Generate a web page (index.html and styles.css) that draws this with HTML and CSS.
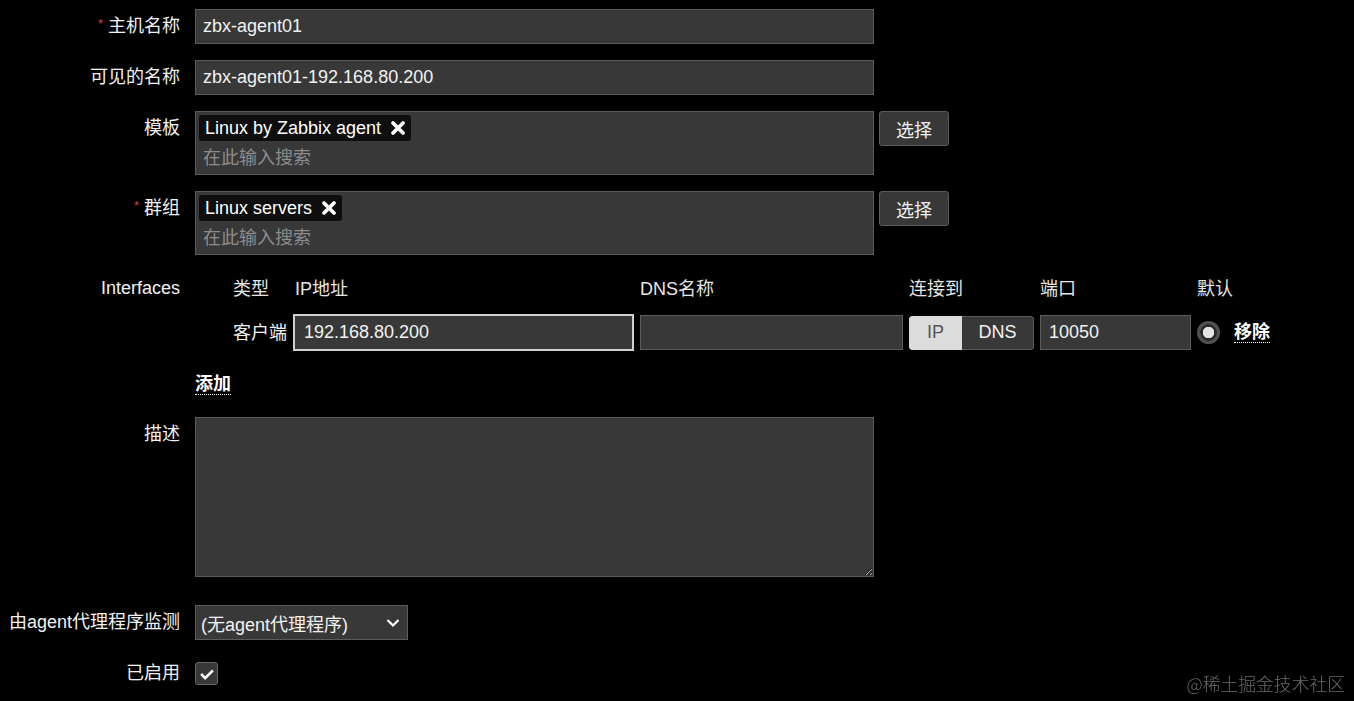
FILE: index.html
```html
<!DOCTYPE html>
<html>
<head>
    <title>主机</title>
    <meta charset="UTF-8">
    <link rel="stylesheet" href="styles.css">
</head>
<body>
    <form class="host-form">
        <div class="form-row">
            <label class="form-label"><span class="required">*</span>主机名称</label>
            <div class="form-field">
                <input class="text-input wide" type="text" value="zbx-agent01">
            </div>
        </div>

        <div class="form-row">
            <label class="form-label">可见的名称</label>
            <div class="form-field">
                <input class="text-input wide" type="text" value="zbx-agent01-192.168.80.200">
            </div>
        </div>

        <div class="form-row">
            <label class="form-label">模板</label>
            <div class="form-field">
                <div class="multiselect">
                    <div class="tag-list">
                        <span class="tag">Linux by Zabbix agent
                            <svg class="tag-remove" viewBox="0 0 16 16" width="16" height="16"><path d="M3 3 L13 13 M13 3 L3 13" stroke="#fff" stroke-width="3.8" stroke-linecap="round"/></svg>
                        </span>
                    </div>
                    <input class="ms-search" type="text" placeholder="在此输入搜索">
                </div>
                <button type="button" class="btn-select">选择</button>
            </div>
        </div>

        <div class="form-row">
            <label class="form-label"><span class="required">*</span>群组</label>
            <div class="form-field">
                <div class="multiselect">
                    <div class="tag-list">
                        <span class="tag">Linux servers
                            <svg class="tag-remove" viewBox="0 0 16 16" width="16" height="16"><path d="M3 3 L13 13 M13 3 L3 13" stroke="#fff" stroke-width="3.8" stroke-linecap="round"/></svg>
                        </span>
                    </div>
                    <input class="ms-search" type="text" placeholder="在此输入搜索">
                </div>
                <button type="button" class="btn-select">选择</button>
            </div>
        </div>

        <div class="form-row">
            <label class="form-label">Interfaces</label>
            <div class="iface-table">
                <div class="iface-head">类型</div>
                <div class="iface-head head-ip">IP地址</div>
                <div class="iface-head">DNS名称</div>
                <div class="iface-head">连接到</div>
                <div class="iface-head">端口</div>
                <div class="iface-head">默认</div>

                <div class="iface-type">客户端</div>
                <input class="text-input ip-input" type="text" value="192.168.80.200">
                <input class="text-input" type="text" value="">
                <div class="conn-toggle">
                    <span class="conn-option active">IP</span>
                    <span class="conn-option">DNS</span>
                </div>
                <input class="text-input port-input" type="text" value="10050">
                <div class="iface-default">
                    <span class="radio"></span>
                    <a class="link-action">移除</a>
                </div>
            </div>
        </div>

        <div class="form-row">
            <span class="form-label"></span>
            <div class="form-field">
                <a class="link-action link-add">添加</a>
            </div>
        </div>

        <div class="form-row row-desc">
            <label class="form-label">描述</label>
            <div class="form-field">
                <textarea class="desc-input"></textarea>
            </div>
        </div>

        <div class="form-row">
            <label class="form-label">由agent代理程序监测</label>
            <div class="form-field">
                <div class="select-box">
                    <span>(无agent代理程序)</span>
                    <svg viewBox="0 0 16 16" width="16" height="16"><path d="M2.5 5 L8 10.5 L13.5 5" fill="none" stroke="#fff" stroke-width="2.2"/></svg>
                </div>
            </div>
        </div>

        <div class="form-row">
            <label class="form-label">已启用</label>
            <div class="form-field">
                <span class="checkbox">
                    <svg viewBox="0 0 22 22" width="20" height="20"><path d="M4.5 11 L9 15.5 L17.5 7" fill="none" stroke="#fff" stroke-width="3"/></svg>
                </span>
            </div>
        </div>
    </form>

    <div class="watermark">@稀土掘金技术社区</div>
</body>
</html>
```

FILE: styles.css
```css
body {
    margin: 0;
    padding: 9px 0 0 0;
    background-color: #000;
    color: #f2f2f2;
    font-family: "Liberation Sans", "Noto Sans CJK SC", sans-serif;
    font-size: 18px;
    height: 692px;
    overflow: hidden;
}
.host-form {
    display: flex;
    flex-direction: column;
}
.form-row {
    display: grid;
    grid-template-columns: 180px 1fr;
    column-gap: 15px;
    margin-bottom: 16px;
}
.row-desc {
    margin-top: -1px;
    margin-bottom: 28px;
}
.form-label {
    height: 35px;
    text-align: right;
    line-height: 35px;
    white-space: nowrap;
    overflow: hidden;
}
.required {
    color: #d64541;
    font-size: 13px;
    line-height: 1;
    vertical-align: 4px;
    margin-right: 5px;
}
.form-field {
    display: flex;
    align-items: flex-start;
    min-height: 35px;
}
input {
    font-family: inherit;
}
.text-input {
    box-sizing: border-box;
    height: 35px;
    padding: 0 8px;
    background-color: #383838;
    border: 1px solid #5c5c5c;
    color: #f2f2f2;
    font-size: 18px;
    outline: none;
    width: 100%;
}
.text-input.wide {
    width: 679px;
    padding-left: 7px;
}
.multiselect {
    box-sizing: border-box;
    width: 679px;
    height: 64px;
    padding: 3px;
    background-color: #383838;
    border: 1px solid #5c5c5c;
}
.tag-list {
    display: flex;
    height: 26px;
}
.tag {
    display: inline-flex;
    align-items: center;
    height: 26px;
    padding: 0 5px 0 6px;
    gap: 9px;
    background-color: #0e0e0e;
    border-radius: 3px;
    color: #fff;
    line-height: 26px;
}
.tag-remove {
    display: block;
}
.ms-search {
    display: block;
    box-sizing: border-box;
    width: 100%;
    height: 30px;
    padding: 4px 4px 0 4px;
    background: transparent;
    border: none;
    color: #f2f2f2;
    font-size: 18px;
    outline: none;
}
.ms-search::placeholder {
    color: #8c8c8c;
}
.btn-select {
    box-sizing: border-box;
    width: 70px;
    height: 35px;
    margin-left: 5px;
    background-color: #383838;
    border: 1px solid #5c5c5c;
    border-radius: 3px;
    color: #f2f2f2;
    font-family: inherit;
    font-size: 18px;
}
.iface-table {
    display: grid;
    grid-template-columns: 54px 341px 263px 125px 151px auto;
    grid-template-rows: 35px 37px;
    column-gap: 6px;
    row-gap: 8px;
    align-items: center;
    padding-left: 38px;
}
.iface-head {
    color: #e6e6e6;
    white-space: nowrap;
    line-height: 20px;
}
.head-ip {
    padding-left: 2px;
}
.iface-type {
    white-space: nowrap;
    line-height: 20px;
}
.ip-input {
    height: 37px;
    border: 2px solid #d0d0d0;
    padding-left: 9px;
}
.conn-toggle {
    display: flex;
    height: 34px;
    border-radius: 3px;
    overflow: hidden;
}
.conn-option {
    display: flex;
    align-items: center;
    justify-content: center;
    box-sizing: border-box;
    width: 72px;
    background-color: #383838;
    border: 1px solid #5c5c5c;
    border-left: none;
    border-radius: 0 3px 3px 0;
}
.conn-option.active {
    width: 53px;
    background-color: #dcdcdc;
    color: #555;
    border: none;
    border-radius: 3px 0 0 3px;
}
.port-input {
    padding-left: 8px;
}
.iface-default {
    display: flex;
    align-items: center;
    gap: 14px;
}
.radio {
    display: inline-block;
    width: 23px;
    height: 23px;
    border-radius: 50%;
    background: radial-gradient(circle, #e4e4e4 0 5.5px, #2a2a2a 6px 8px, #505050 8.5px);
}
.link-action {
    display: inline-block;
    color: #fff;
    font-weight: bold;
    line-height: 20px;
    border-bottom: 1px dotted #fff;
    cursor: pointer;
}
.link-add {
    margin-top: 7px;
}
.desc-input {
    display: block;
    box-sizing: border-box;
    width: 679px;
    height: 160px;
    margin: 0;
    padding: 6px 7px;
    background-color: #383838;
    border: 1px solid #5c5c5c;
    color: #f2f2f2;
    font-family: inherit;
    font-size: 18px;
    resize: vertical;
    color-scheme: dark;
    outline: none;
}
.select-box {
    box-sizing: border-box;
    display: flex;
    align-items: center;
    justify-content: space-between;
    width: 213px;
    height: 35px;
    padding: 0 6px 0 5px;
    background-color: #383838;
    border: 1px solid #5c5c5c;
}
.select-box svg {
    display: block;
}
.checkbox {
    box-sizing: border-box;
    display: flex;
    align-items: center;
    justify-content: center;
    width: 23px;
    height: 23px;
    margin-top: 6px;
    background-color: #383838;
    border: 1px solid #666;
    border-radius: 3px;
}
.watermark {
    position: fixed;
    right: 9px;
    bottom: 8px;
    font-family: "Noto Sans CJK SC", sans-serif;
    font-size: 17.8px;
    font-weight: 300;
    color: #6a6a6a;
    line-height: 20px;
}
```
